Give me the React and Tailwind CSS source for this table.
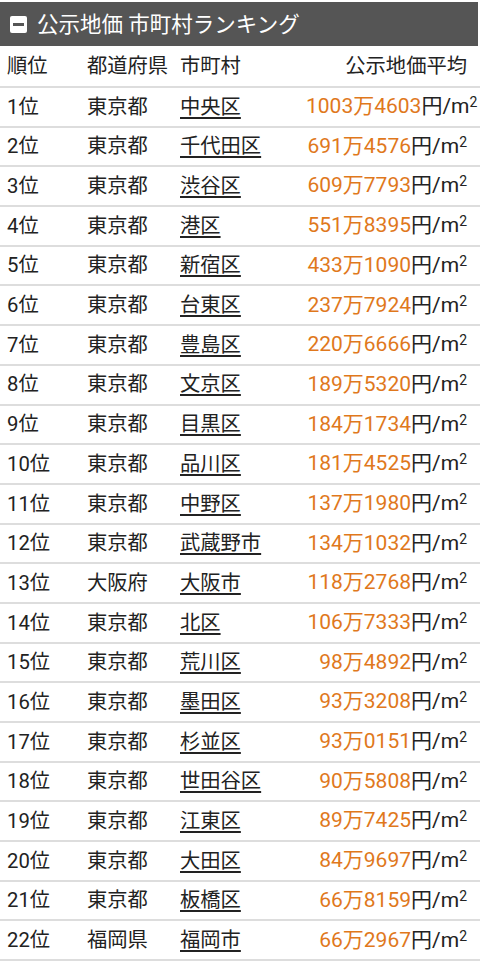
import React from "react";

const rows = [
  ["1位", "東京都", "中央区", "1003万4603"],
  ["2位", "東京都", "千代田区", "691万4576"],
  ["3位", "東京都", "渋谷区", "609万7793"],
  ["4位", "東京都", "港区", "551万8395"],
  ["5位", "東京都", "新宿区", "433万1090"],
  ["6位", "東京都", "台東区", "237万7924"],
  ["7位", "東京都", "豊島区", "220万6666"],
  ["8位", "東京都", "文京区", "189万5320"],
  ["9位", "東京都", "目黒区", "184万1734"],
  ["10位", "東京都", "品川区", "181万4525"],
  ["11位", "東京都", "中野区", "137万1980"],
  ["12位", "東京都", "武蔵野市", "134万1032"],
  ["13位", "大阪府", "大阪市", "118万2768"],
  ["14位", "東京都", "北区", "106万7333"],
  ["15位", "東京都", "荒川区", "98万4892"],
  ["16位", "東京都", "墨田区", "93万3208"],
  ["17位", "東京都", "杉並区", "93万0151"],
  ["18位", "東京都", "世田谷区", "90万5808"],
  ["19位", "東京都", "江東区", "89万7425"],
  ["20位", "東京都", "大田区", "84万9697"],
  ["21位", "東京都", "板橋区", "66万8159"],
  ["22位", "福岡県", "福岡市", "66万2967"]
];

export default function App() {
  return (
    <div
      className="w-[480px] bg-white text-[#222] pt-[2px] overflow-hidden"
      style={{ fontFamily: 'Roboto, "Noto Sans CJK JP", sans-serif' }}
    >
      {/* HEADER */}
      <div className="h-[44px] bg-[#555555] mr-[2px] flex items-center pl-[10px] gap-[10px]">
        <div className="w-[17px] h-[17px] bg-white rounded-[2px] flex items-center justify-center">
          <div className="w-[11px] h-[3px] bg-[#555555]" />
        </div>
        <span className="text-white text-[21.5px] pt-[2px]">公示地価 市町村ランキング</span>
      </div>

      {/* TABLE */}
      <div className="text-[20.3px]">
        <div className="h-[42px] border-b-2 border-[#dddddd] flex items-center pl-[7px]">
          <div className="w-[80px]">順位</div>
          <div className="w-[93px]">都道府県</div>
          <div className="w-[126px]">市町村</div>
          <div className="w-[161px] text-right">公示地価平均</div>
        </div>

        {rows.map(r => (
          <div
            key={r[0]}
            className="h-[39.7px] border-b-2 border-[#dddddd] flex items-center pl-[7px]"
          >
            <div className="w-[80px] shrink-0">{r[0]}</div>
            <div className="w-[93px] shrink-0">{r[1]}</div>
            <div className="w-[126px] shrink-0">
              <span className="underline underline-offset-[3px]">{r[2]}</span>
            </div>
            <div className="w-[161px] shrink-0 text-right whitespace-nowrap text-[21px]">
              <span className="text-[#e0781c]">{r[3]}</span>
              円/m<sup className="text-[14px] top-[-6px]">2</sup>
            </div>
          </div>
        ))}
      </div>
    </div>
  );
}
